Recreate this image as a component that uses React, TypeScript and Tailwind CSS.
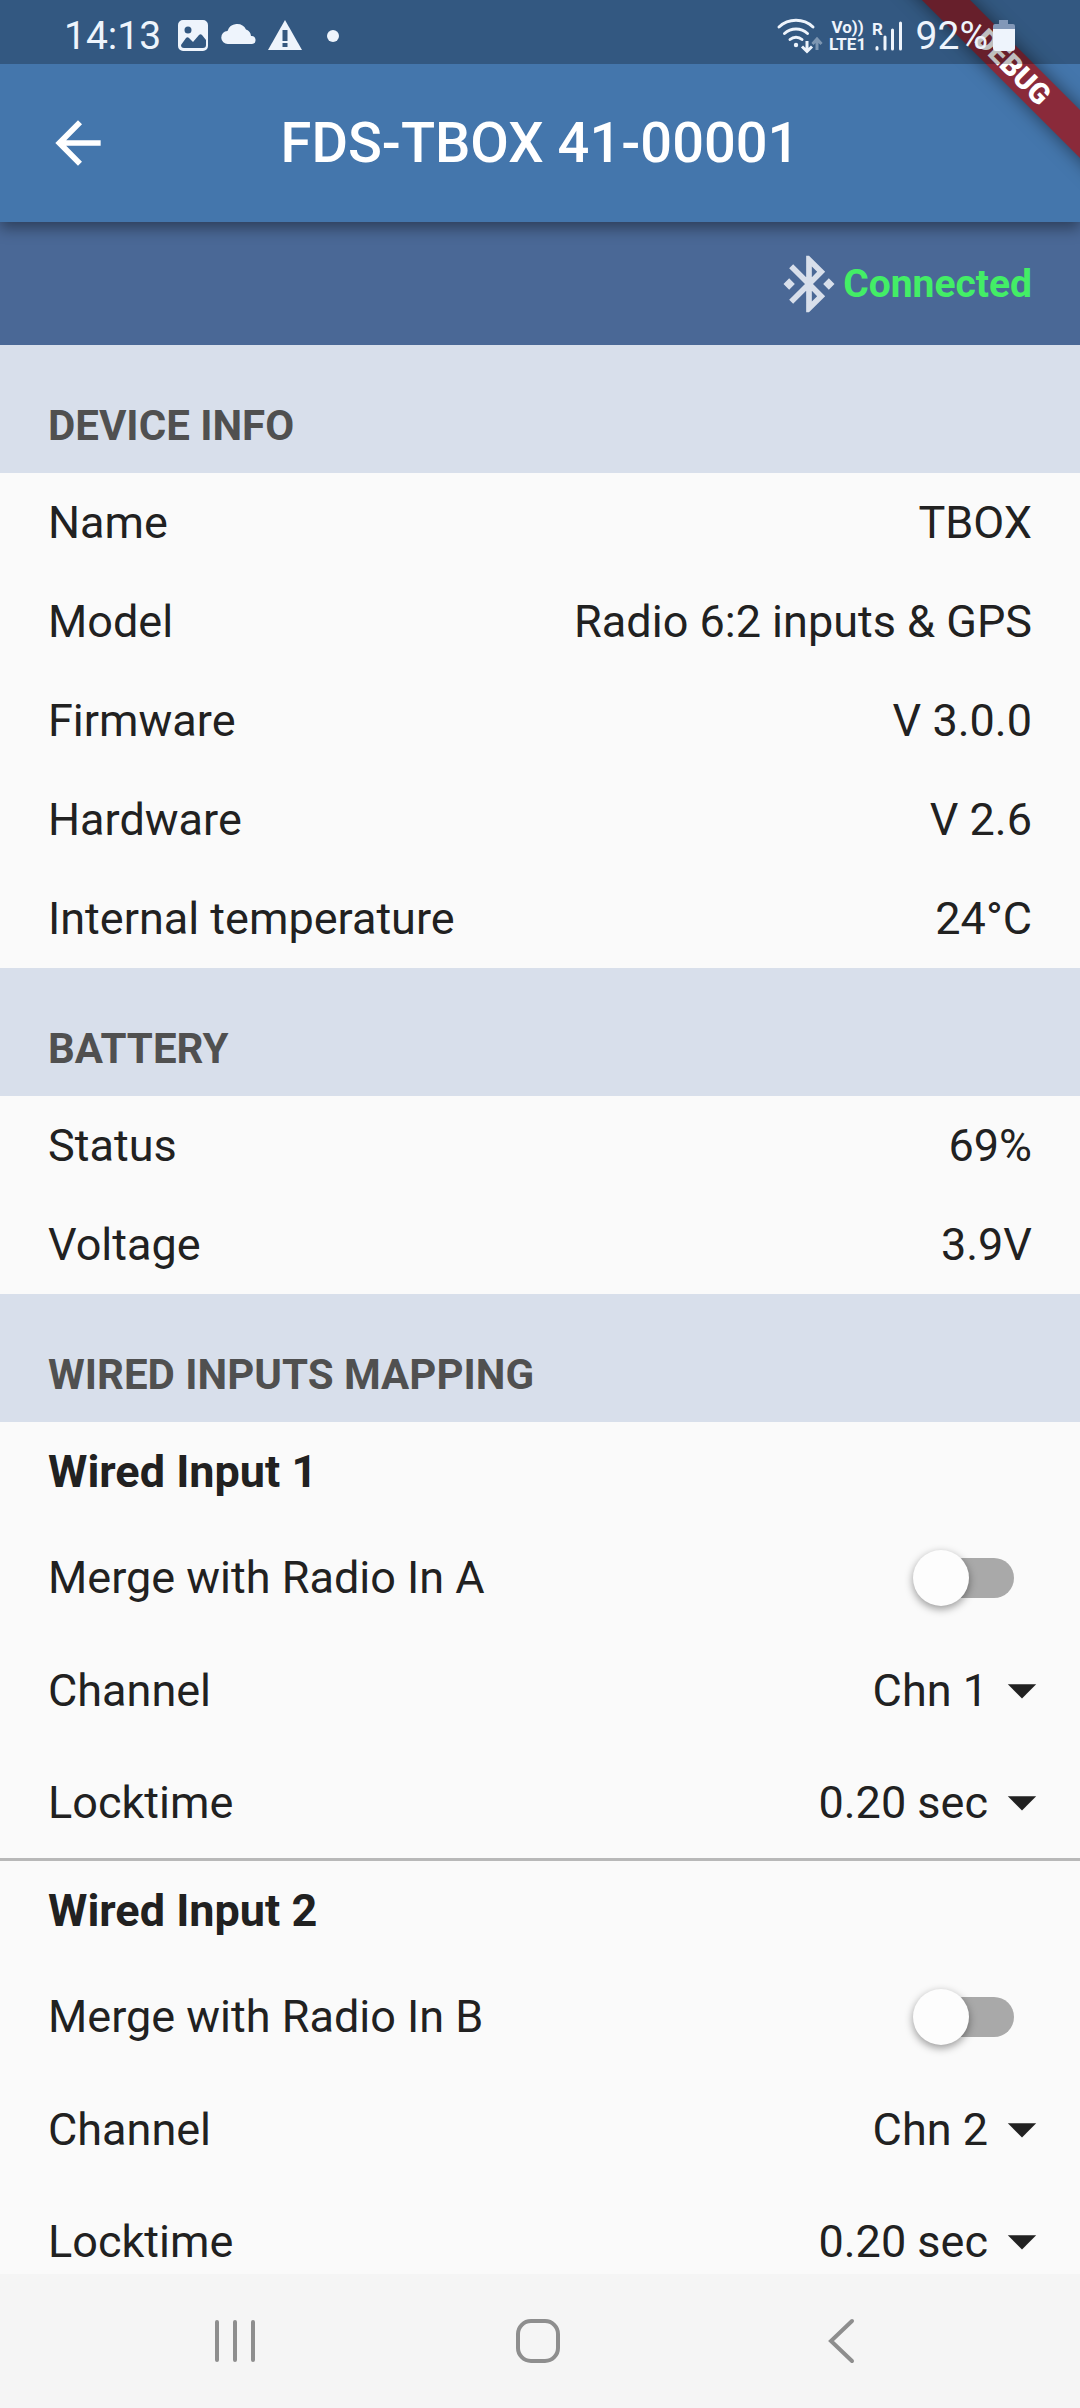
import React, { useState } from 'react';

interface InfoItem {
  label: string;
  value: string;
}

interface WiredInput {
  id: number;
  radio: string;
  channel: string;
  locktime: string;
}

const DEVICE_INFO: InfoItem[] = [
  { label: 'Name', value: 'TBOX' },
  { label: 'Model', value: 'Radio 6:2 inputs & GPS' },
  { label: 'Firmware', value: 'V 3.0.0' },
  { label: 'Hardware', value: 'V 2.6' },
  { label: 'Internal temperature', value: '24°C' },
];

const BATTERY: InfoItem[] = [
  { label: 'Status', value: '69%' },
  { label: 'Voltage', value: '3.9V' },
];

const WIRED_INPUTS: WiredInput[] = [
  { id: 1, radio: 'A', channel: 'Chn 1', locktime: '0.20 sec' },
  { id: 2, radio: 'B', channel: 'Chn 2', locktime: '0.20 sec' },
];

const CHANNELS = ['Chn 1', 'Chn 2', 'Chn 3', 'Chn 4'];
const LOCKTIMES = ['0.10 sec', '0.20 sec', '0.50 sec', '1.00 sec'];

const StatusBar: React.FC = () => (
  <div className="relative z-10 flex h-16 items-center justify-between bg-black/25 px-16 pt-2 text-[39px] leading-[44px] text-[#eef4fc]">
    <div className="flex items-center">
      <span>14:13</span>
      <svg className="ml-4 h-8 w-8" viewBox="0 0 32 32" fill="currentColor" aria-hidden="true">
        <path
          fillRule="evenodd"
          d="M6 0h20a5 5 0 0 1 5 5v21a5 5 0 0 1-5 5H6a5 5 0 0 1-5-5V5a5 5 0 0 1 5-5zM11 6.500a3.500 3.500 0 1 0 0 7 3.500 3.500 0 0 0 0-7zM4 25c0 2 1 3 3 3h19c2 0 3-1 3-3v-5l-4-5c-1-1-2-1-3 0l-6 7-4-4c-1-1-2-1-3 0z"
        />
      </svg>
      <svg className="ml-3 h-8 w-9" viewBox="0 0 36 32" fill="currentColor" aria-hidden="true">
        <path d="M7 24a6.500 6.500 0 0 1-.5-13A10 10 0 0 1 25 9.500a7.500 7.500 0 0 1 5 6.500 4 4 0 0 1 1 8z" />
      </svg>
      <svg className="ml-2.5 h-8 w-9" viewBox="0 0 36 32" aria-hidden="true">
        <path fill="currentColor" d="M18 0 35 30H1z" />
        <path fill="#35587f" d="M15.500 10h5v11h-5zM15.500 23h5v4h-5z" />
      </svg>
      <span className="ml-6 h-3 w-3 rounded-full bg-[#eef4fc]" />
    </div>

    <div className="flex items-center">
      <svg className="h-9 w-12" viewBox="0 0 48 36" fill="none" stroke="currentColor" aria-hidden="true">
        <g strokeWidth="3" strokeLinecap="round">
          <path d="M3 9a25 25 0 0 1 34 0" />
          <path d="M8.500 15.500a17 17 0 0 1 23 0" />
          <path d="M14 21.500a9 9 0 0 1 12 0" />
        </g>
        <circle cx="20" cy="27" r="2.200" fill="currentColor" stroke="none" />
        <path strokeWidth="3" d="M31 23v10M26 28.500l5 5 5-5" />
        <path strokeWidth="3" opacity=".4" d="M41 32V21M36.500 26l4.500-5 4.500 5" />
      </svg>
      <div className="ml-1 flex w-10 flex-col text-center text-[17px] leading-[17px] font-bold">
        <span>Vo))</span>
        <span>LTE1</span>
      </div>
      <svg className="ml-1 h-9 w-8" viewBox="0 0 32 36" aria-hidden="true">
        <text x="0" y="17" fontSize="17" fontWeight="700" fill="currentColor">
          R
        </text>
        <g stroke="currentColor" strokeWidth="3" strokeLinecap="round">
          <path d="M5 29.500v1.500M13 19v12M20.500 12v19M28.500 5v26" />
        </g>
      </svg>
      <span className="ml-3">92%</span>
      <svg className="ml-1 h-8 w-6" viewBox="0 0 24 32" aria-hidden="true">
        <path fill="#8298b8" d="M7 0h9v4h5a2 2 0 0 1 2 2v4H1V6a2 2 0 0 1 2-2h4z" />
        <path fill="currentColor" d="M1 9h22v19a3 3 0 0 1-3 3H4a3 3 0 0 1-3-3z" />
      </svg>
    </div>
  </div>
);

const DebugBanner: React.FC = () => (
  <div className="pointer-events-none absolute top-0 right-0 h-[134px] w-[134px]">
    {/* Ribbon is centred on the box, so it crosses the corner at 45 degrees */}
    <div className="flex h-full w-full rotate-45 items-center justify-center">
      <span className="flex h-[34px] w-80 shrink-0 items-center justify-center bg-[#8a2a3a] text-[29px] leading-[34px] font-black text-white shadow-[0_0_18px_rgba(0,0,0,0.5)]">
        DEBUG
      </span>
    </div>
  </div>
);

const AppHeader: React.FC = () => (
  <header className="relative z-10 shrink-0 bg-[#4476ac] shadow-[0_6px_14px_rgba(0,0,0,0.4)]">
    <div className="absolute inset-0 overflow-hidden">
      <DebugBanner />
    </div>
    <StatusBar />
    <div className="grid h-[158px] grid-cols-[68px_1fr_68px] items-center px-11">
      <button type="button" aria-label="Back" className="text-white">
        <svg className="h-[68px] w-[68px]" viewBox="0 0 24 24" fill="currentColor">
          <path d="M20 11H7.830l5.590-5.590L12 4l-8 8 8 8 1.410-1.410L7.830 13H20v-2z" />
        </svg>
      </button>
      <h1 className="text-center text-[56px] leading-[66px] font-medium text-white">FDS-TBOX 41-00001</h1>
    </div>
  </header>
);

const ConnectionBar: React.FC = () => (
  <div className="flex h-[123px] items-center justify-end bg-[#4a6896] px-12">
    <svg className="h-[68px] w-[68px] text-[#d8dfeb]" viewBox="0 0 24 24" fill="currentColor" aria-hidden="true">
      <path d="M7 12l-2-2-2 2 2 2 2-2zm10.710-4.290L12 2h-1v7.590L6.410 5 5 6.410 10.590 12 5 17.590 6.410 19 11 14.410V22h1l5.710-5.710-4.300-4.290 4.300-4.290zM13 5.830l1.880 1.880L13 9.590V5.830zm1.880 10.460L13 18.170v-3.760l1.880 1.880zM19 10l-2 2 2 2 2-2-2-2z" />
    </svg>
    <span className="text-[39px] leading-[46px] font-bold text-[#43ee66]">Connected</span>
  </div>
);

const SectionTitle: React.FC<{ children: React.ReactNode }> = ({ children }) => (
  <h2 className="h-32 bg-[#d8dfeb] px-12 pt-14 text-[42px] leading-[50px] font-bold text-[#505050]">{children}</h2>
);

const InfoList: React.FC<{ items: InfoItem[] }> = ({ items }) => (
  <dl>
    {items.map((item) => (
      <div key={item.label} className="flex h-[99px] items-center justify-between px-12">
        <dt>{item.label}</dt>
        <dd>{item.value}</dd>
      </div>
    ))}
  </dl>
);

interface DropdownRowProps {
  id: string;
  label: string;
  value: string;
  options: string[];
  onChange: (value: string) => void;
}

const DropdownRow: React.FC<DropdownRowProps> = ({ id, label, value, options, onChange }) => (
  <div className="flex h-28 items-center justify-between pr-6 pl-12">
    <label htmlFor={id}>{label}</label>
    <div className="relative">
      <select
        id={id}
        value={value}
        onChange={(e) => onChange(e.target.value)}
        className="block [field-sizing:content] appearance-none bg-transparent pr-[68px]"
      >
        {options.map((option) => (
          <option key={option} value={option}>
            {option}
          </option>
        ))}
      </select>
      <svg
        className="pointer-events-none absolute inset-y-0 right-0 my-auto h-[68px] w-[68px]"
        viewBox="0 0 24 24"
        fill="currentColor"
        aria-hidden="true"
      >
        <path d="M7 10l5 5 5-5z" />
      </svg>
    </div>
  </div>
);

const WiredInputGroup: React.FC<{ input: WiredInput }> = ({ input }) => {
  const [merged, setMerged] = useState(false);
  const [channel, setChannel] = useState(input.channel);
  const [locktime, setLocktime] = useState(input.locktime);

  return (
    <div className="border-b-3 border-[#b8b8b8] last:border-b-0">
      <h3 className="flex h-[99px] items-center px-12 font-bold">Wired Input {input.id}</h3>
      <div className="flex h-[113px] items-center justify-between pr-[66px] pl-12">
        <label htmlFor={`merge-${input.id}`}>Merge with Radio In {input.radio}</label>
        <span className="relative flex h-14 w-[101px] items-center justify-end">
          <input
            id={`merge-${input.id}`}
            type="checkbox"
            role="switch"
            checked={merged}
            onChange={(e) => setMerged(e.target.checked)}
            className="peer h-10 w-[93px] appearance-none rounded-full bg-[#a9a9a9] checked:bg-[#4476ac]/50"
          />
          <span className="pointer-events-none absolute top-0 left-0 h-14 w-14 rounded-full bg-[#fdfdfd] shadow-[0_3px_8px_rgba(0,0,0,0.4)] peer-checked:left-12 peer-checked:bg-[#4476ac]" />
        </span>
      </div>
      <DropdownRow
        id={`channel-${input.id}`}
        label="Channel"
        value={channel}
        options={CHANNELS}
        onChange={setChannel}
      />
      <DropdownRow
        id={`locktime-${input.id}`}
        label="Locktime"
        value={locktime}
        options={LOCKTIMES}
        onChange={setLocktime}
      />
    </div>
  );
};

const NavigationBar: React.FC = () => (
  <nav className="flex h-[134px] shrink-0 items-center justify-around bg-[#f5f5f5] pr-22 pl-21 text-[#8e8e8e]">
    <button type="button" aria-label="Recent apps">
      <svg className="h-12 w-12" viewBox="0 0 48 48" fill="none" stroke="currentColor" strokeWidth="4" strokeLinecap="round">
        <path d="M6 5v38M24 5v38M42 5v38" />
      </svg>
    </button>
    <button type="button" aria-label="Home">
      <svg className="h-12 w-12" viewBox="0 0 48 48" fill="none" stroke="currentColor" strokeWidth="4">
        <rect x="4" y="4" width="40" height="40" rx="13" />
      </svg>
    </button>
    <button type="button" aria-label="Back to previous screen">
      <svg className="h-12 w-12" viewBox="0 0 48 48" fill="none" stroke="currentColor" strokeWidth="4" strokeLinecap="round">
        <path d="M35 4 14 24l21 20" />
      </svg>
    </button>
  </nav>
);

export default function App() {
  return (
    <div className="flex h-screen flex-col bg-[#fafafa] font-['Roboto',sans-serif] text-[45px] leading-[53px] text-[#212121]">
      <AppHeader />
      <main className="min-h-0 flex-1 overflow-y-auto [scrollbar-width:none]">
        <ConnectionBar />
        <section>
          <SectionTitle>DEVICE INFO</SectionTitle>
          <InfoList items={DEVICE_INFO} />
        </section>
        <section>
          <SectionTitle>BATTERY</SectionTitle>
          <InfoList items={BATTERY} />
        </section>
        <section>
          <SectionTitle>WIRED INPUTS MAPPING</SectionTitle>
          {WIRED_INPUTS.map((input) => (
            <WiredInputGroup key={input.id} input={input} />
          ))}
        </section>
      </main>
      <NavigationBar />
    </div>
  );
}
